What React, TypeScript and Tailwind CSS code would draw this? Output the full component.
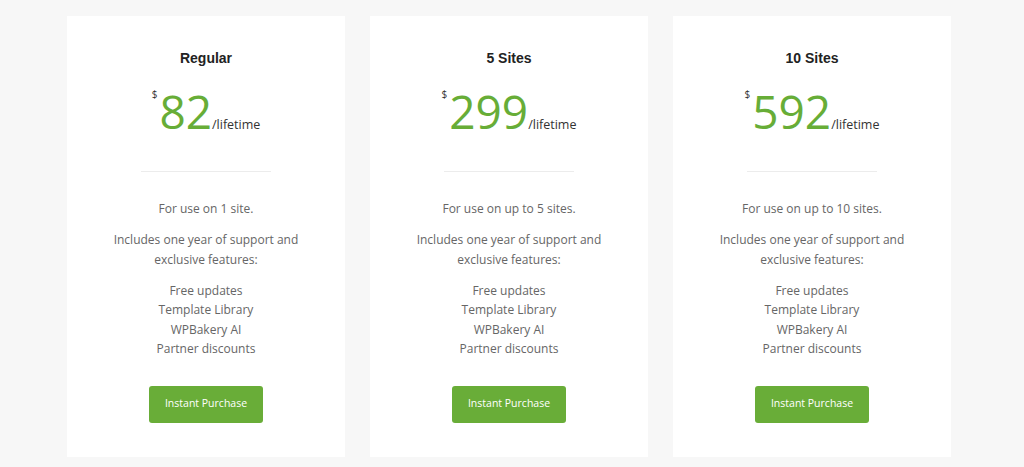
const plans = [
  { name: "Regular", price: "82", use: "For use on 1 site." },
  { name: "5 Sites", price: "299", use: "For use on up to 5 sites." },
  { name: "10 Sites", price: "592", use: "For use on up to 10 sites." },
];

const features = ["Free updates", "Template Library", "WPBakery AI", "Partner discounts"];

function PlanCard({ name, price, use }: { name: string; price: string; use: string }) {
  return (
    <div className="flex w-[278px] flex-col items-center bg-white pt-[34px] pb-[34px] text-center">
      <h3 className="font-['Liberation_Sans',Arial,sans-serif] text-[14px] leading-[17px] font-bold text-[#222]">
        {name}
      </h3>
      <div className="mt-[21px] flex items-start font-['Open_Sans',sans-serif]">
        <span className="mt-[1px] mr-[2px] text-[10px] leading-none text-[#333]">$</span>
        <div className="flex items-baseline">
          <span className="text-[46px] leading-[46px] text-[#67ad37]">{price}</span>
          <span className="text-[12.5px] leading-[17px] text-[#333]">/lifetime</span>
        </div>
      </div>
      <div className="mt-[37px] w-[130px] border-t border-[#ececec]" />
      <div className="mt-[27px] font-['Open_Sans',sans-serif] text-[12px] leading-[19.5px] text-[#666]">
        <p>{use}</p>
        <p className="mt-[11.5px]">
          Includes one year of support and
          <br />
          exclusive features:
        </p>
        <ul className="mt-[11.5px]">
          {features.map((f) => (
            <li key={f}>{f}</li>
          ))}
        </ul>
      </div>
      <button className="mt-[27px] h-[37px] w-[114px] rounded-[3px] bg-[#69ad38] font-['Open_Sans',sans-serif] text-[10.5px] text-white">
        Instant Purchase
      </button>
    </div>
  );
}

export default function App() {
  return (
    <div className="min-h-[467px] bg-[#f7f7f7] pt-[16px] pl-[67px]">
      <div className="flex gap-[25px]">
        {plans.map((p) => (
          <PlanCard key={p.name} {...p} />
        ))}
      </div>
    </div>
  );
}
